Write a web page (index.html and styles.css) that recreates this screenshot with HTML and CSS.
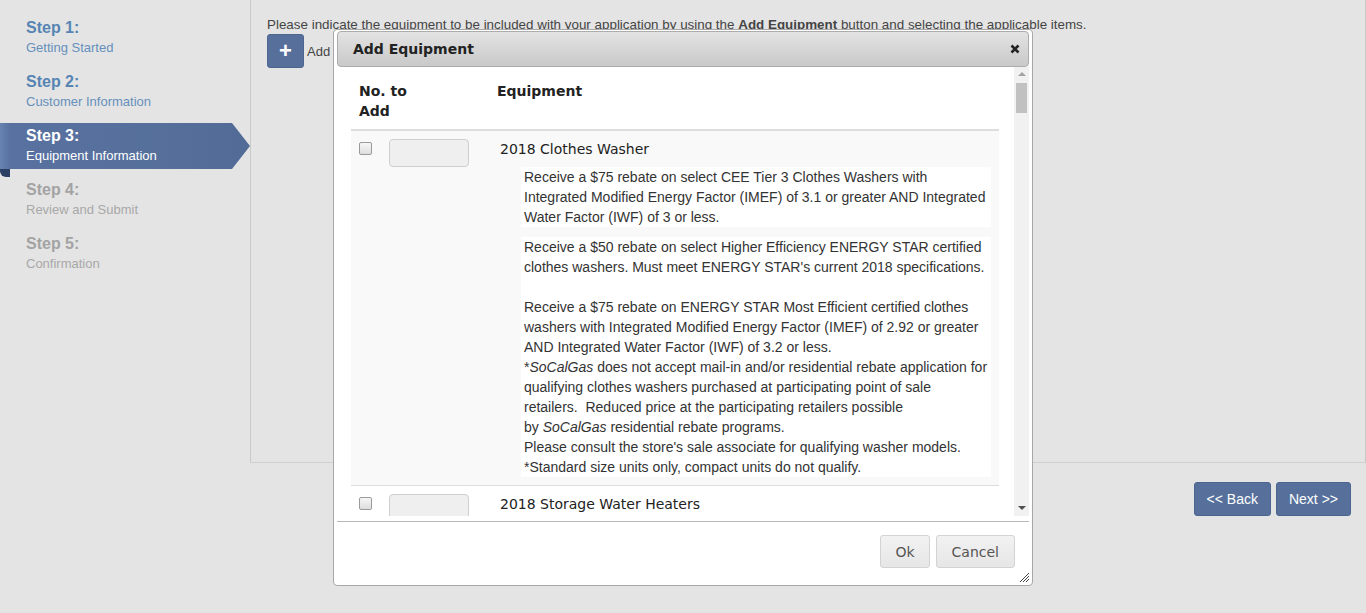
FILE: index.html
```html
<!DOCTYPE html>
<html lang="en">
<head>
<meta charset="utf-8">
<title>Equipment Information</title>
<link rel="stylesheet" href="styles.css">
</head>
<body>
<div class="page">
  <nav class="steps">
    <div class="step done"><div class="step-label">Step 1:</div><div class="step-desc">Getting Started</div></div>
    <div class="step done"><div class="step-label">Step 2:</div><div class="step-desc">Customer Information</div></div>
    <div class="step active"><div class="step-label">Step 3:</div><div class="step-desc">Equipment Information</div></div>
    <div class="step todo"><div class="step-label">Step 4:</div><div class="step-desc">Review and Submit</div></div>
    <div class="step todo"><div class="step-label">Step 5:</div><div class="step-desc">Confirmation</div></div>
  </nav>
  <div class="right">
    <main class="panel">
      <p class="intro">Please indicate the equipment to be included with your application by using the <b>Add Equipment</b> button and selecting the applicable items.</p>
      <div class="add-row"><button class="plus-btn">+</button><span class="add-label">Add Equipment</span></div>
    </main>
    <div class="nav-buttons">
      <button class="nav-btn">&lt;&lt; Back</button>
      <button class="nav-btn">Next &gt;&gt;</button>
    </div>
  </div>
</div>

<div class="dialog">
  <div class="dlg-title">
    <span class="dlg-title-text">Add Equipment</span>
    <button class="dlg-close" aria-label="close">
      <svg width="10" height="10" viewBox="0 0 10 10"><path d="M1.5 1.5 L8.5 8.5 M8.5 1.5 L1.5 8.5" stroke="#222" stroke-width="2.6" stroke-linecap="butt"/></svg>
    </button>
  </div>
  <div class="dlg-body">
    <div class="dlg-scroll">
      <div class="eq-table">
        <div class="eq-head">
          <div class="c1">No. to<br>Add</div>
          <div class="c2">Equipment</div>
        </div>
        <div class="eq-row odd">
          <div class="c1"><input type="checkbox" class="chk"><input type="text" class="qty"></div>
          <div class="c2">
            <div class="eq-name">2018 Clothes Washer</div>
            <div class="eq-desc">Receive a $75 rebate on select CEE Tier 3 Clothes Washers with<br>Integrated Modified Energy Factor (IMEF) of 3.1 or greater AND Integrated<br>Water Factor (IWF) of 3 or less.</div>
            <div class="eq-desc">Receive a $50 rebate on select Higher Efficiency ENERGY STAR certified<br>clothes washers. Must meet ENERGY STAR's current 2018 specifications.<br>&nbsp;<br>Receive a $75 rebate on ENERGY STAR Most Efficient certified clothes<br>washers with Integrated Modified Energy Factor (IMEF) of 2.92 or greater<br>AND Integrated Water Factor (IWF) of 3.2 or less.<br>*<i>SoCalGas</i> does not accept mail-in and/or residential rebate application for<br>qualifying clothes washers purchased at participating point of sale<br>retailers.&nbsp; Reduced price at the participating retailers possible<br>by <i>SoCalGas</i> residential rebate programs.<br>Please consult the store's sale associate for qualifying washer models.<br>*Standard size units only, compact units do not qualify.</div>
          </div>
        </div>
        <div class="eq-row">
          <div class="c1"><input type="checkbox" class="chk"><input type="text" class="qty"></div>
          <div class="c2">
            <div class="eq-name">2018 Storage Water Heaters</div>
          </div>
        </div>
      </div>
    </div>
    <div class="scrollbar">
      <span class="sb-arrow up"></span>
      <span class="sb-thumb"></span>
      <span class="sb-arrow down"></span>
    </div>
  </div>
  <div class="dlg-buttons">
    <button class="dlg-btn ok">Ok</button>
    <button class="dlg-btn cancel">Cancel</button>
  </div>
  <svg class="resize" width="11" height="11" viewBox="0 0 11 11"><path d="M10 1 L1 10 M10 4 L4 10 M10 7 L7 10" stroke="#444" stroke-width="1"/></svg>
</div>
</body>
</html>
```

FILE: styles.css
```css
* { box-sizing: border-box; }

html, body {
  margin: 0;
  padding: 0;
  background: #e4e4e4;
  font-family: "Liberation Sans", Arial, sans-serif;
  color: #333;
}

.page {
  display: flex;
  min-height: 613px;
}

/* ---------- steps ---------- */
.steps {
  width: 250px;
  flex: none;
  padding-top: 11px;
}

.step {
  position: relative;
  padding: 7px 0 7px 26px;
}

.step-label {
  position: relative;
  z-index: 1;
  font-weight: bold;
  font-size: 16px;
  line-height: 20px;
}

.step-desc {
  position: relative;
  z-index: 1;
  font-size: 13px;
  line-height: 20px;
}

.step.done .step-label { color: #5784b3; }
.step.done .step-desc { color: #6690bc; }
.step.todo .step-label { color: #a3a3a3; }
.step.todo .step-desc { color: #a8a8a8; }
.step.active .step-label,
.step.active .step-desc { color: #ffffff; }

.step.active::before {
  content: "";
  position: absolute;
  left: 0;
  top: 4px;
  bottom: 4px;
  width: 250px;
  background: linear-gradient(to right, #6783b0 0, #5871a0 10px, #56709c 60%, #526b96 100%);
  clip-path: polygon(0 0, calc(100% - 18px) 0, 100% 50%, calc(100% - 18px) 100%, 0 100%);
}

.step.active::after {
  content: "";
  position: absolute;
  left: 0;
  bottom: -4px;
  width: 10px;
  height: 8px;
  background: #2c4066;
  border-radius: 0 0 0 6px;
}

/* ---------- main panel ---------- */
.right {
  flex: 1;
  display: flex;
  flex-direction: column;
}

.panel {
  height: 463px;
  border-left: 1px solid #c9c9c9;
  border-right: 1px solid #c9c9c9;
  border-bottom: 1px solid #d0d0d0;
  padding: 17px 0 0 16px;
}

.intro {
  margin: 0;
  font-size: 13.4px;
  line-height: 16px;
  color: #444;
}

.add-row {
  display: flex;
  align-items: center;
  gap: 3px;
  margin-top: 1px;
}

.plus-btn {
  width: 37px;
  height: 34px;
  border: 1px solid #4d6690;
  border-radius: 3px;
  background: #56709b;
  color: #fff;
  font-family: "Liberation Sans", Arial, sans-serif;
  font-size: 22px;
  font-weight: bold;
  line-height: 30px;
  padding: 0;
}

.add-label {
  font-size: 13px;
  color: #444;
}

.nav-buttons {
  display: flex;
  justify-content: flex-end;
  gap: 5px;
  margin-top: 19px;
  padding-right: 15px;
}

.nav-btn {
  height: 34px;
  padding: 0 12px;
  background: #56709b;
  border: 1px solid #4a6590;
  border-radius: 3px;
  color: #fff;
  font-family: "Liberation Sans", Arial, sans-serif;
  font-size: 14px;
}

/* ---------- dialog ---------- */
.dialog {
  position: absolute;
  left: 333px;
  top: 29px;
  width: 700px;
  height: 557px;
  background: #fff;
  border: 1px solid #a8a8a8;
  border-radius: 4px;
  padding: 1px 3px 0 3px;
  display: flex;
  flex-direction: column;
  font-family: "DejaVu Sans", Verdana, sans-serif;
}

.dlg-title {
  height: 36px;
  flex: none;
  display: flex;
  align-items: center;
  justify-content: space-between;
  padding: 0 8px 0 15px;
  background: linear-gradient(#e3e3e3, #c9c9c9);
  border: 1px solid #acacac;
  border-radius: 4px;
}

.dlg-title-text {
  font-weight: bold;
  font-size: 14px;
  color: #222;
}

.dlg-close {
  border: 0;
  background: transparent;
  padding: 0;
  width: 10px;
  height: 10px;
  display: flex;
}

.dlg-body {
  height: 455px;
  flex: none;
  display: flex;
  align-items: flex-start;
  border-bottom: 1px solid #b8b8b8;
}

.dlg-scroll {
  flex: 1;
  height: 449px;
  overflow: hidden;
  padding: 0 15px 0 14px;
}

.eq-table {
  width: 100%;
}

.eq-head {
  display: flex;
  border-bottom: 2px solid #dddddd;
  font-weight: bold;
  font-size: 14px;
  line-height: 20px;
  color: #222;
}

.eq-head .c1 {
  width: 138px;
  flex: none;
  padding: 14px 8px 8px 8px;
}

.eq-head .c2 {
  flex: 1;
  padding: 14px 8px 8px 8px;
}

.eq-row {
  display: flex;
  border-bottom: 1px solid #dddddd;
}

.eq-row.odd { background: #f9f9f9; }

.eq-row .c1 {
  width: 138px;
  flex: none;
  display: flex;
  align-items: flex-start;
  padding: 8px 8px 8px 8px;
}

.chk {
  appearance: none;
  -webkit-appearance: none;
  width: 13px;
  height: 13px;
  margin: 3px 17px 0 0;
  border: 1px solid #9a9a9a;
  border-radius: 2px;
  background: linear-gradient(#f6f6f6, #dedede);
  flex: none;
}

.qty {
  width: 80px;
  height: 28px;
  margin: 0;
  border: 1px solid #cfcfcf;
  border-radius: 4px;
  background: #efefef;
  flex: none;
}

.eq-row .c2 {
  flex: 1;
  padding: 8px 8px 8px 11px;
}

.eq-name {
  font-size: 14px;
  line-height: 20px;
  color: #222;
}

.eq-desc {
  margin: 8px 0 0 21px;
  padding-left: 3px;
  background: #fff;
  font-family: "Liberation Sans", Arial, sans-serif;
  font-size: 14px;
  line-height: 20px;
  color: #333;
  white-space: nowrap;
}

.eq-desc + .eq-desc { margin-top: 10px; }

.scrollbar {
  width: 15px;
  height: 449px;
  flex: none;
  background: #f1f1f1;
  position: relative;
}

.sb-arrow {
  position: absolute;
  left: 4px;
  width: 0;
  height: 0;
  border-left: 4px solid transparent;
  border-right: 4px solid transparent;
}

.sb-arrow.up {
  top: 5px;
  border-bottom: 4px solid #a3a3a3;
}

.sb-arrow.down {
  bottom: 6px;
  border-top: 4px solid #505050;
}

.sb-thumb {
  position: absolute;
  left: 2px;
  top: 16px;
  width: 11px;
  height: 30px;
  background: #c1c1c1;
}

.dlg-buttons {
  flex: 1;
  display: flex;
  justify-content: flex-end;
  align-items: flex-start;
  gap: 6px;
  padding: 13px 14px 0 0;
}

.dlg-btn {
  height: 33px;
  padding: 0 15px;
  border: 1px solid #d3d3d3;
  border-radius: 3px;
  background: linear-gradient(#f2f2f2, #e6e6e6);
  color: #555;
  font-family: "DejaVu Sans", Verdana, sans-serif;
  font-size: 14px;
}

.dlg-btn.ok { padding: 0 14px; }

.resize {
  position: absolute;
  right: 2px;
  bottom: 2px;
}
```
